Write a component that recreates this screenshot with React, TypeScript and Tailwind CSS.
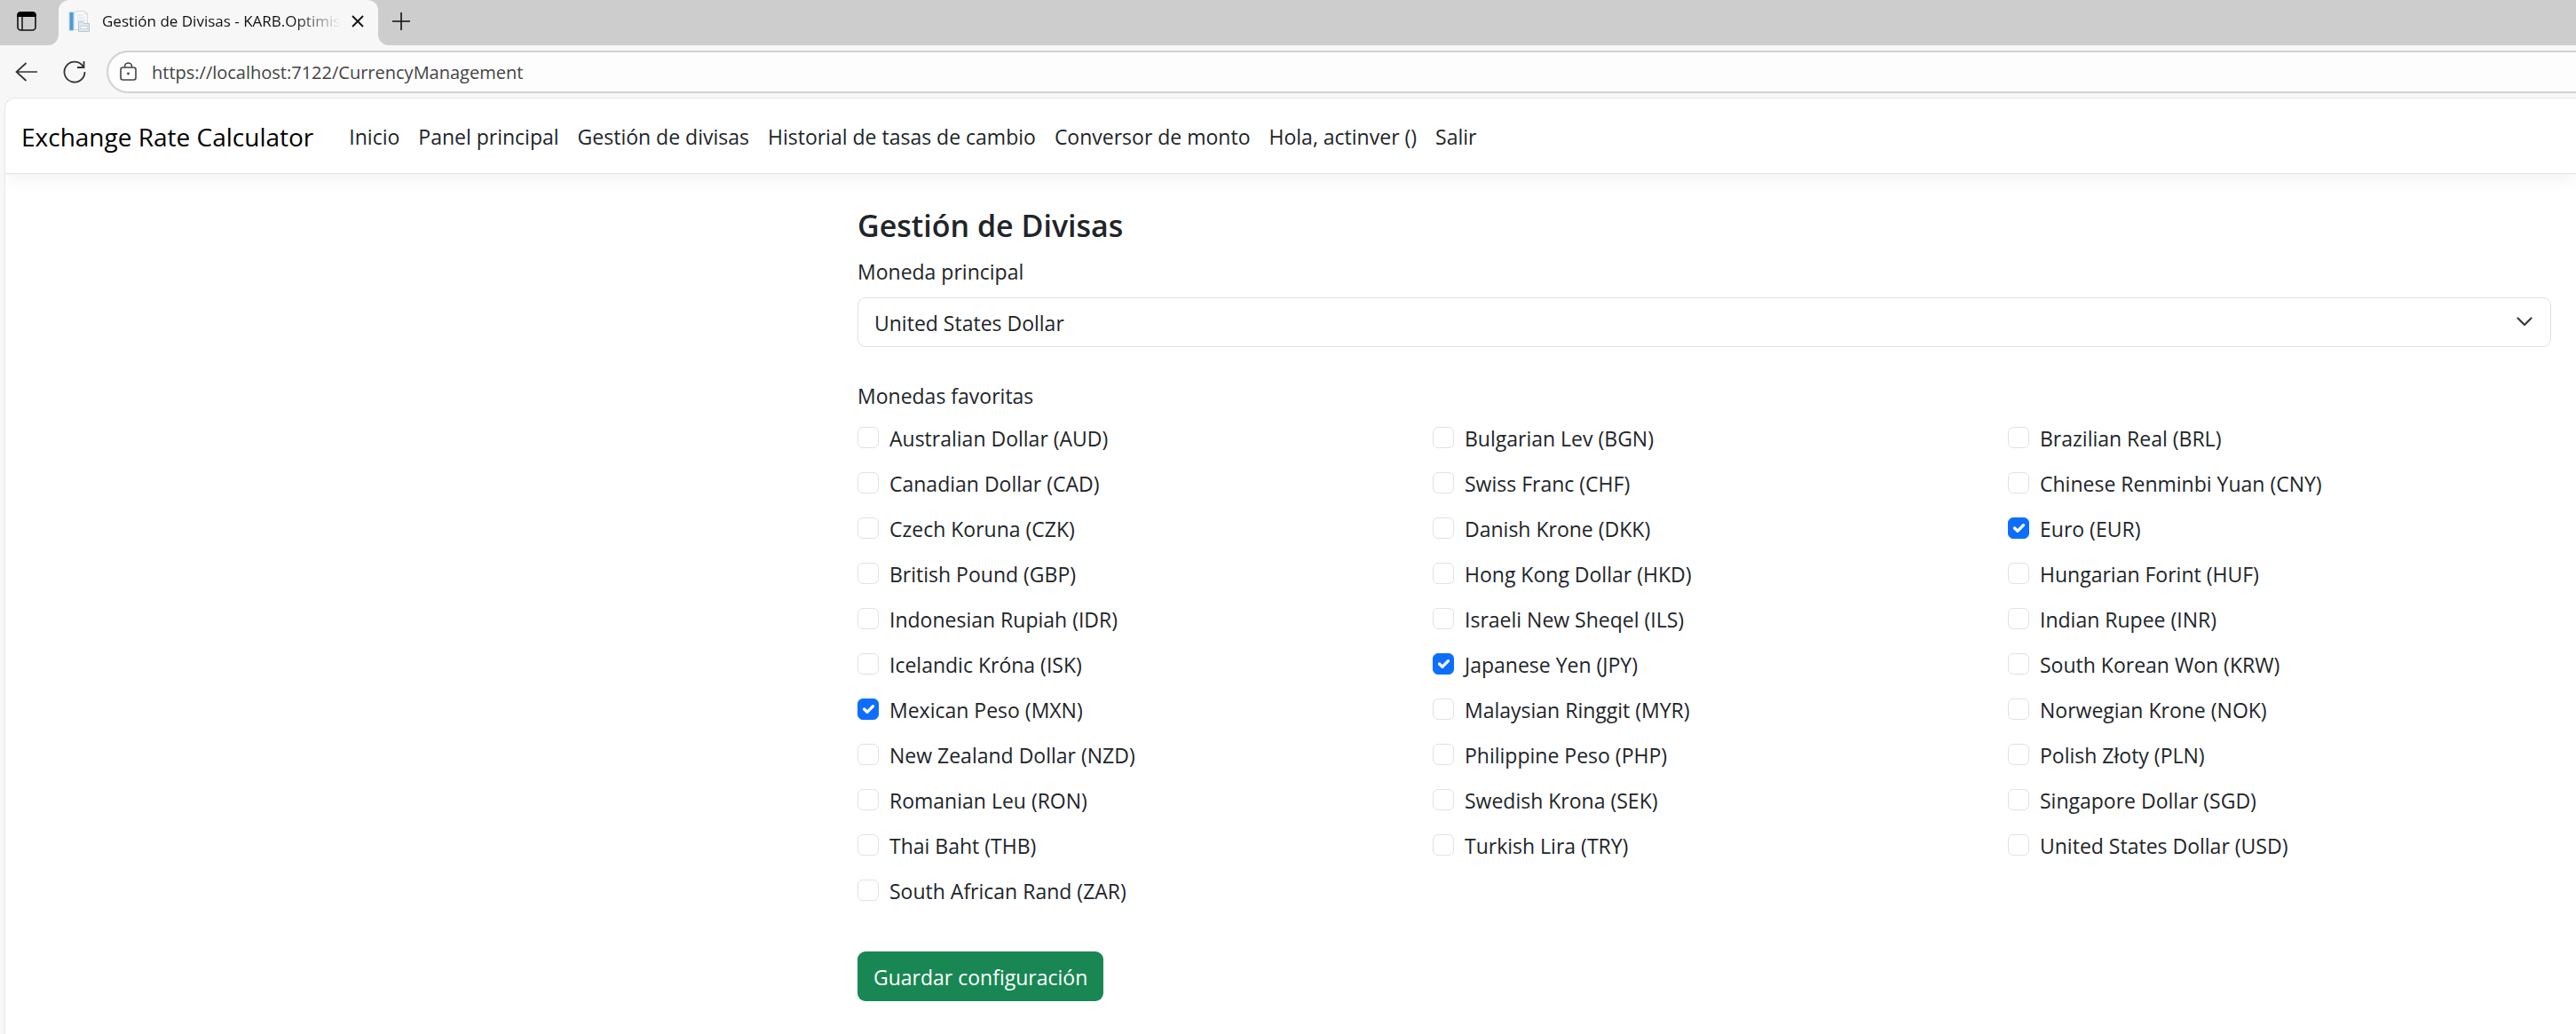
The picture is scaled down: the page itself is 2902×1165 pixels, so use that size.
import { useState } from "react";

const NAV_LINKS = [
  "Inicio",
  "Panel principal",
  "Gestión de divisas",
  "Historial de tasas de cambio",
  "Conversor de monto",
  "Hola, actinver ()",
  "Salir",
];

const CURRENCIES: [string, string][] = [
  ["AUD", "Australian Dollar"],
  ["BGN", "Bulgarian Lev"],
  ["BRL", "Brazilian Real"],
  ["CAD", "Canadian Dollar"],
  ["CHF", "Swiss Franc"],
  ["CNY", "Chinese Renminbi Yuan"],
  ["CZK", "Czech Koruna"],
  ["DKK", "Danish Krone"],
  ["EUR", "Euro"],
  ["GBP", "British Pound"],
  ["HKD", "Hong Kong Dollar"],
  ["HUF", "Hungarian Forint"],
  ["IDR", "Indonesian Rupiah"],
  ["ILS", "Israeli New Sheqel"],
  ["INR", "Indian Rupee"],
  ["ISK", "Icelandic Króna"],
  ["JPY", "Japanese Yen"],
  ["KRW", "South Korean Won"],
  ["MXN", "Mexican Peso"],
  ["MYR", "Malaysian Ringgit"],
  ["NOK", "Norwegian Krone"],
  ["NZD", "New Zealand Dollar"],
  ["PHP", "Philippine Peso"],
  ["PLN", "Polish Złoty"],
  ["RON", "Romanian Leu"],
  ["SEK", "Swedish Krona"],
  ["SGD", "Singapore Dollar"],
  ["THB", "Thai Baht"],
  ["TRY", "Turkish Lira"],
  ["USD", "United States Dollar"],
  ["ZAR", "South African Rand"],
];

function TabActionsIcon() {
  return (
    <svg width="24" height="24" viewBox="0 0 24 24" fill="none">
      <rect x="2" y="2" width="20" height="20" rx="3.5" stroke="#111" strokeWidth="1.6" />
      <path d="M1.200 7V5a3.800 3.800 0 0 1 3.800-3.800h14A3.800 3.800 0 0 1 22.800 5v2z" fill="#000" />
      <path d="M7 7v15" stroke="#111" strokeWidth="1.500" />
    </svg>
  );
}

function PageIcon() {
  return (
    <svg width="24" height="24" viewBox="0 0 24 24">
      <path d="M6.500 1.500h3v-1h9l3 3v18h-15z" fill="#f6f8fa" stroke="#d3d9de" />
      <path d="M18.500.500v3h3M10 5h7M10 8h9M10 11h9" fill="none" stroke="#dbe1e6" />
      <rect x="1" y="1.500" width="5" height="21" fill="#4a9bd4" stroke="#cfe2f0" />
      <path d="M11.500 12.500h5l1 2h6v9h-12z" fill="#dfe7f0" stroke="#b9c6d3" />
      <rect x="13.500" y="17.500" width="8" height="3" fill="#fff" stroke="#c9d4de" />
    </svg>
  );
}

function LockIcon() {
  return (
    <svg width="20" height="22" viewBox="0 0 20 22" fill="none" stroke="#444" strokeWidth="1.600">
      <rect x="1" y="6" width="17" height="14" rx="2.500" />
      <path d="M5.500 6V5a4 4 0 0 1 8 0v1" />
      <circle cx="9.500" cy="13" r="1.400" fill="#444" stroke="none" />
    </svg>
  );
}

function Browser() {
  return (
    <header className="bg-[#f7f7f7]">
      <div className="flex h-[51px] items-stretch">
        <div className="flex w-[66px] items-center rounded-br-xl bg-[#cdcdcd] pb-[3px] pl-[18px]">
          <button aria-label="Menú de pestañas">
            <TabActionsIcon />
          </button>
        </div>
        <div className="flex w-[360px] bg-linear-to-b from-[#cdcdcd] from-50% to-[#f7f7f7] to-50%">
          <div className="flex min-w-0 flex-1 items-center rounded-t-xl bg-[#f7f7f7] pr-4 pb-[3px] pl-[11px]">
            <PageIcon />
            <span className="ml-[14px] flex-1 overflow-hidden bg-linear-to-r from-[#111] from-80% to-[#f7f7f7] bg-clip-text text-[17px] whitespace-nowrap text-transparent">
              Gestión de Divisas - KARB.Optimis
            </span>
            <button aria-label="Cerrar pestaña" className="ml-3">
              <svg width="14" height="14" viewBox="0 0 14 14" stroke="#111" strokeWidth="1.800">
                <path d="M1 1l12 12M13 1L1 13" />
              </svg>
            </button>
          </div>
        </div>
        <div className="flex flex-1 items-center rounded-bl-xl bg-[#cdcdcd] pb-[3px] pl-[15px]">
          <button aria-label="Nueva pestaña">
            <svg width="22" height="22" viewBox="0 0 22 22" stroke="#111" strokeWidth="1.600">
              <path d="M11 1v20M1 11h20" />
            </svg>
          </button>
        </div>
      </div>
      <div className="flex h-[59px] items-center pl-[17px]">
        <button aria-label="Atrás">
          <svg width="26" height="24" viewBox="0 0 26 24" fill="none" stroke="#333" strokeWidth="1.700">
            <path d="M25 12H1.500M12.500 2l-11 10 11 10" />
          </svg>
        </button>
        <button aria-label="Actualizar" className="ml-[28px]">
          <svg width="26" height="26" viewBox="0 0 26 26" fill="none" stroke="#333" strokeWidth="1.800">
            <path d="M24.500 13a11.500 11.500 0 1 1-3-7.700L23 7.500M23.500 1v7h-7.500" />
          </svg>
        </button>
        <div className="ml-[23px] flex h-12 flex-1 items-center rounded-l-full border-2 border-r-0 border-[#d2d2d2] bg-[#fdfdfd] pl-[13px]">
          <LockIcon />
          <input
            aria-label="Dirección"
            className="ml-4 flex-1 bg-transparent pt-[2px] text-[20px] text-[#444] outline-none"
            defaultValue="https://localhost:7122/CurrencyManagement"
          />
        </div>
      </div>
    </header>
  );
}

export default function App() {
  const [selected, setSelected] = useState<string[]>(["EUR", "JPY", "MXN"]);
  const toggle = (code: string) =>
    setSelected((s) => (s.includes(code) ? s.filter((c) => c !== code) : [...s, code]));

  return (
    <div className="flex min-h-screen flex-col bg-[#f7f7f7] font-['Open_Sans','Noto_Sans',sans-serif] text-[23px] leading-[38px] text-[#212529]">
      <Browser />
      <div className="ml-[5px] flex-1 overflow-hidden rounded-tl-xl border-t border-l border-[#e6e6e6] bg-white">
        <nav className="flex h-[85px] items-center border-b border-[#dee2e6] px-[18px] pt-[2px] shadow-[0_6px_18px_rgba(0,0,0,0.05)]">
          <a href="#" className="mr-10 text-[28px] text-black">
            Exchange Rate Calculator
          </a>
          <div className="flex gap-[21px]">
            {NAV_LINKS.map((label) => (
              <a key={label} href="#">
                {label}
              </a>
            ))}
          </div>
        </nav>
        <main className="grid grid-cols-[1fr_2fr] gap-x-[6px] pt-9 pr-7">
          <form className="col-start-2" onSubmit={(e) => e.preventDefault()}>
            <h1 className="mb-[10px] text-[34px] leading-[45px] font-semibold">Gestión de Divisas</h1>
            <label htmlFor="main-currency" className="mb-[10px] block">
              Moneda principal
            </label>
            <div className="relative mb-9">
              <select
                id="main-currency"
                defaultValue="USD"
                className="block h-14 w-full appearance-none rounded-[9px] border border-[#dee2e6] bg-white px-[18px] pt-[2px]"
              >
                {CURRENCIES.map(([code, name]) => (
                  <option key={code} value={code}>
                    {name}
                  </option>
                ))}
              </select>
              <svg
                className="pointer-events-none absolute top-4 right-[18px]"
                width="24"
                height="24"
                viewBox="0 0 16 16"
                fill="none"
                stroke="#343a40"
                strokeWidth="1.500"
                strokeLinecap="round"
                strokeLinejoin="round"
              >
                <path d="m3 5 5 5 5-5" />
              </svg>
            </div>
            <fieldset>
              <legend className="mb-[10px]">Monedas favoritas</legend>
              <div className="-mr-9 grid grid-cols-3 gap-y-[13px]">
                {CURRENCIES.map(([code, name]) => (
                  <label key={code} className="flex gap-3">
                    <input
                      type="checkbox"
                      checked={selected.includes(code)}
                      onChange={() => toggle(code)}
                      className="peer sr-only"
                    />
                    <span className="mt-[6px] flex size-6 items-center justify-center rounded-md border border-[#dee2e6] bg-white text-transparent peer-checked:border-[#0d6efd] peer-checked:bg-[#0d6efd] peer-checked:text-white">
                      <svg
                        width="22"
                        height="22"
                        viewBox="0 0 20 20"
                        fill="none"
                        stroke="currentColor"
                        strokeWidth="3"
                        strokeLinecap="round"
                        strokeLinejoin="round"
                      >
                        <path d="m6 10 3 3 6-6" />
                      </svg>
                    </span>
                    {name} ({code})
                  </label>
                ))}
              </div>
            </fieldset>
            <button
              type="submit"
              className="mt-[49px] h-14 rounded-[9px] bg-[#198754] px-[18px] pt-[2px] text-white"
            >
              Guardar configuración
            </button>
          </form>
        </main>
      </div>
    </div>
  );
}
